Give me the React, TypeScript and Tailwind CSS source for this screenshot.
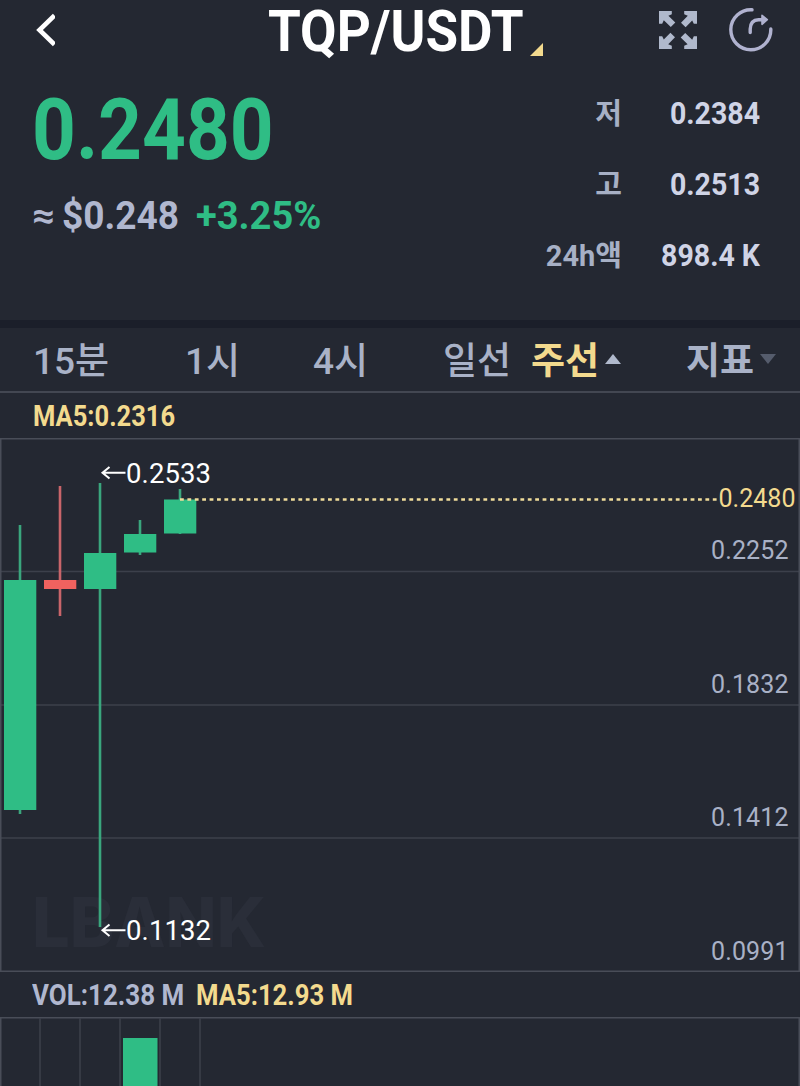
import type React from "react";
import clsx from "clsx";

type Candle = {
	x: number;
	high: number;
	low: number;
	top: number;
	bottom: number;
	up: boolean;
};

type StatRow = {
	label: string;
	value: string;
};

const stats: StatRow[] = [
	{ label: "저", value: "0.2384" },
	{ label: "고", value: "0.2513" },
	{ label: "24h액", value: "898.4 K" },
];

// y positions are relative to the top of the price chart
const candles: Candle[] = [
	{ x: 20, high: 87, low: 376, top: 142, bottom: 372, up: true },
	{ x: 60, high: 48, low: 178, top: 142, bottom: 151, up: false },
	{ x: 100, high: 45, low: 489, top: 115, bottom: 151, up: true },
	{ x: 140, high: 82, low: 117, top: 96, bottom: 114.5, up: true },
	{ x: 180, high: 51, low: 96, top: 61.5, bottom: 95.5, up: true },
];

const gridLines = [133.5, 267, 400];

const priceLabels = [
	{ y: 121, value: "0.2252" },
	{ y: 254.5, value: "0.1832" },
	{ y: 388, value: "0.1412" },
	{ y: 521.5, value: "0.0991" },
];

const BackIcon: React.FC = () => (
	<svg width="24" height="36" viewBox="0 0 24 36" fill="none">
		<path d="M23.5 3.5 L8.5 18 L23.5 32.5" stroke="#fff" strokeWidth="4.6" />
	</svg>
);

const ExpandIcon: React.FC = () => (
	<svg width="38" height="38" viewBox="0 0 38 38">
		<g fill="#b0b9cc">
			{[0, 90, 180, 270].map((angle) => (
				<path
					key={angle}
					d="M0 0H12.8V3.2L9.4 4.8L16.3 11.4L11.8 16L4.8 9.2L3.2 12.8H0Z"
					transform={`rotate(${angle} 19 19)`}
				/>
			))}
		</g>
	</svg>
);

const ShareIcon: React.FC = () => (
	<svg width="46" height="46" viewBox="0 0 46 46" fill="none">
		<path
			d="M24 3.8 A20 20 0 1 0 42.8 23"
			stroke="#b0b2cf"
			strokeWidth="3.4"
			strokeLinecap="round"
		/>
		<path
			d="M22.2 26.5 V23 Q22.5 14 30.5 13.7 H34.5"
			stroke="#b0b2cf"
			strokeWidth="3.4"
			strokeLinecap="round"
		/>
		<path
			d="M34 9.3 L39.3 13.7 L34 18.3Z"
			fill="#b0b2cf"
			stroke="#b0b2cf"
			strokeWidth="1.6"
			strokeLinejoin="round"
		/>
	</svg>
);

const Header: React.FC = () => (
	<header className="h-[64px] flex items-start">
		<button type="button" className="ml-[31px] mt-3">
			<BackIcon />
		</button>
		<div className="ml-[213px] w-[278px] h-[64px] flex items-start">
			<h1 className="w-[280px] -mr-[24px] shrink-0 origin-left scale-x-[0.93] whitespace-nowrap text-[57px] leading-[64px] font-bold text-white">
				TQP/USDT
			</h1>
			<svg width="13" height="13" viewBox="0 0 13 13" className="mt-[43px] ml-[6px] shrink-0">
				<path d="M13 0V13H0Z" fill="#f3da8e" />
			</svg>
		</div>
		<button type="button" className="ml-[113px] mt-[11px]">
			<ExpandIcon />
		</button>
		<button type="button" className="ml-[31px] mt-[6px]">
			<ShareIcon />
		</button>
	</header>
);

const Summary: React.FC = () => (
	<section className="h-[256px] flex justify-between">
		<div className="pl-8">
			<div className="mt-[16px] h-[100px] origin-left scale-x-[0.89] whitespace-nowrap text-[86px] leading-[100px] font-bold text-[#2fbd85]">
				0.2480
			</div>
			<div className="mt-[12px] flex h-[48px] text-[39px] leading-[48px] font-bold whitespace-nowrap">
				<span className="w-[30px] origin-left scale-x-[1.1] text-[36px] text-[#b0b7cf]">
					≈
				</span>
				<span className="w-[134px] origin-left scale-x-[0.95] text-[#b0b7cf]">
					$0.248
				</span>
				<span className="origin-left scale-x-[0.975] text-[#2fbd85]">
					+3.25%
				</span>
			</div>
		</div>
		<dl className="pt-[14px] pr-10">
			{stats.map((row) => (
				<div
					key={row.label}
					className="flex h-[71px] items-start justify-end text-[31px] leading-[71px] font-bold whitespace-nowrap"
				>
					<dt className="pt-px text-[29px] text-[#a7b0c5]">{row.label}</dt>
					<dd className="w-[138px] origin-right scale-x-[0.92] text-right text-[#d0d4e6]">
						{row.value}
					</dd>
				</div>
			))}
		</dl>
	</section>
);

const IntervalTabs: React.FC = () => (
	<nav className="flex h-[63px] items-center border-t-8 border-[#1b1f2a] box-content pl-[33px] text-[37px] leading-[64px] font-medium whitespace-nowrap text-[#a9b2c7]">
		<span className="w-[152px] pt-[4px]">15분</span>
		<span className="w-[128px] pt-[4px]">1시</span>
		<span className="w-[130px] pt-[4px]">4시</span>
		<span className="w-[88px] pt-[4px]">일선</span>
		<span className="w-[155px] flex items-center font-bold text-[#f3da8e]">
			<span className="pt-[4px]">주선</span>
			<svg width="16" height="10" viewBox="0 0 16 10" className="mb-[2px] ml-[6px]">
				<path d="M8 0L16 10H0Z" fill="#b0b9cc" />
			</svg>
		</span>
		<span className="flex items-center font-bold">
			<span className="pt-[4px]">지표</span>
			<svg width="16" height="10" viewBox="0 0 16 10" className="mb-[2px] ml-[6px]">
				<path d="M0 0H16L8 10Z" fill="#555c6c" />
			</svg>
		</span>
	</nav>
);

const PriceChart: React.FC = () => (
	<svg
		width="800"
		height="534"
		viewBox="0 0 800 534"
		className="block"
		fontFamily="Roboto, sans-serif"
	>
		<text
			x="32"
			y="508.5"
			fontFamily="Inter, sans-serif"
			fontSize="69"
			fontWeight="800"
			fill="#2a2e39"
			textLength="234"
			lengthAdjust="spacingAndGlyphs"
		>
			LBANK
		</text>
		{gridLines.map((y) => (
			<line key={y} x1="0" x2="800" y1={y} y2={y} stroke="#3c404b" strokeWidth="1.5" />
		))}
		<rect x="0.75" y="0.75" width="798.5" height="532.5" fill="none" stroke="#494d58" strokeWidth="1.5" />

		{candles.map((c) => (
			<g key={c.x} fill={c.up ? "#2fbd85" : "#f0625f"}>
				<rect
					x={c.x - 1.3}
					y={c.high}
					width="2.6"
					height={c.low - c.high}
					fill={c.up ? "#3aa67d" : "#c9656a"}
				/>
				<rect x={c.x - 16} y={c.top} width="32.3" height={c.bottom - c.top} />
			</g>
		))}

		<line
			x1="180"
			x2="718"
			y1="61.5"
			y2="61.5"
			stroke="#f0dc9a"
			strokeWidth="2.6"
			strokeDasharray="3.8 3.6"
		/>
		<text x="718.5" y="69" fontSize="25" fill="#f3da8e" textLength="77">
			0.2480
		</text>
		{priceLabels.map((label) => (
			<text
				key={label.value}
				x="711"
				y={label.y}
				fontSize="25"
				fill="#a9b1c6"
				textLength="77.5"
			>
				{label.value}
			</text>
		))}

		{/* high and low markers */}
		<g fill="#fff" fontSize="27.5">
			<path d="M109.5 29 L102.5 34.7 L109.5 40.5 M102.5 34.7 H125.5" fill="none" stroke="#fff" strokeWidth="2" />
			<text x="126" y="44.5" textLength="85">
				0.2533
			</text>
			<path d="M109.5 486.5 L102.5 492.2 L109.5 498 M102.5 492.2 H125.5" fill="none" stroke="#fff" strokeWidth="2" />
			<text x="126" y="502" textLength="85">
				0.1132
			</text>
		</g>
	</svg>
);

const VolumeChart: React.FC = () => (
	<svg width="800" height="69" viewBox="0 0 800 69" className="block">
		<path d="M0.75 69V0.75H799.25V69" fill="none" stroke="#494d58" strokeWidth="1.5" />
		{[40, 80, 120, 160, 200].map((x) => (
			<line key={x} x1={x} x2={x} y1="1" y2="69" stroke="#3c404b" strokeWidth="1.5" />
		))}
		<rect x="123" y="21" width="34.5" height="48" fill="#2fbd85" />
	</svg>
);

const LegendText: React.FC<{ text: string; className: string }> = ({
	text,
	className,
}) => (
	<span className={clsx("inline-block origin-left whitespace-nowrap", className)}>
		{text}
	</span>
);

const App: React.FC = () => (
	<main className="w-[800px] h-[1086px] overflow-hidden bg-[#242832] font-[Roboto,'Noto_Sans_CJK_KR',sans-serif]">
		<Header />
		<Summary />
		<IntervalTabs />
		<div className="h-[47px] border-t-2 border-[#434752] box-border pl-[33px] text-[29px] leading-[47px] font-bold">
			<LegendText text="MA5:0.2316" className="scale-x-[0.88] text-[#f3da8e]" />
		</div>
		<PriceChart />
		<div className="flex h-[45px] pl-8 text-[29px] leading-[46px] font-bold">
			<LegendText
				text="VOL:12.38 M"
				className="w-[164px] scale-x-[0.895] text-[#b0b7cf]"
			/>
			<LegendText text="MA5:12.93 M" className="scale-x-[0.885] text-[#f3da8e]" />
		</div>
		<VolumeChart />
	</main>
);

export default App;
